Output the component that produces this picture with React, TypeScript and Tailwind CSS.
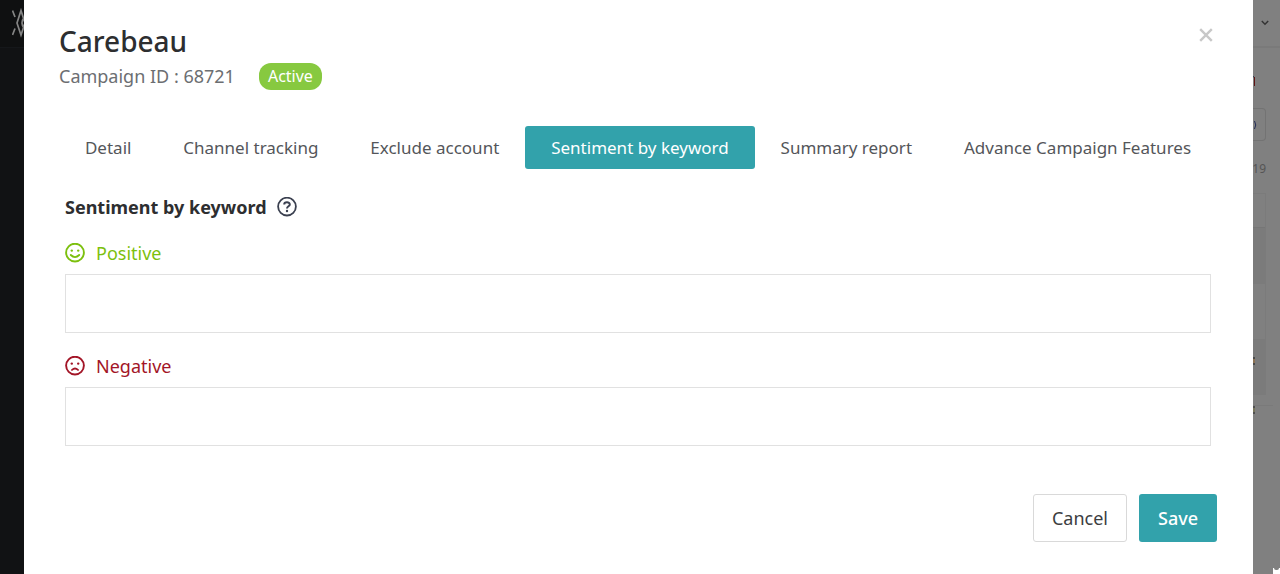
import React from "react";

const tabs = [
  "Detail",
  "Channel tracking",
  "Exclude account",
  "Sentiment by keyword",
  "Summary report",
  "Advance Campaign Features",
];

function Smiley({ sad = false }: { sad?: boolean }) {
  return (
    <svg viewBox="0 0 20 20" className="size-5" fill="none" stroke="currentColor" strokeWidth="1.9" strokeLinecap="round" aria-hidden="true">
      <circle cx="10" cy="9.6" r="8.9" />
      <circle cx="6.8" cy="7.6" r="1.2" fill="currentColor" stroke="none" />
      <circle cx="13.2" cy="7.6" r="1.2" fill="currentColor" stroke="none" />
      <path d={sad ? "M7 13.9 Q10 11.3 13 13.9" : "M5.8 12 Q10 16.2 14.2 12"} />
    </svg>
  );
}

function Sidebar() {
  return (
    <aside className="w-6 shrink-0 overflow-hidden bg-[#111214]">
      <div className="h-12 border-b border-[#15171a] bg-[#0f1011] pt-2 pl-3">
        <svg viewBox="0 0 24 30" className="h-[30px] w-6 max-w-none" fill="none" stroke="#858585" strokeWidth="1.7" aria-hidden="true">
          <path d="M0.5 2.5 L3 9 M0.5 27 L3 20.5 M9 2.5 L5 15 L9 27 L13 15 Z M12 9.5 Q8 15 12 20" />
        </svg>
      </div>
    </aside>
  );
}

function PageEdge() {
  return (
    <aside className="flex w-[27px] shrink-0 flex-col overflow-hidden bg-[#808080]" aria-hidden="true">
      <div className="flex h-12 items-center justify-center border-b-2 border-[#7a7a7a]">
        <svg viewBox="0 0 8 6" className="ml-[-4px] h-[6px] w-2" fill="none" stroke="#333333" strokeWidth="1.5">
          <path d="M0.8 1 L4 4.2 L7.2 1" />
        </svg>
      </div>
      <svg viewBox="0 0 3 10" className="mt-7 h-[10px] w-[3px] shrink-0" fill="none" strokeWidth="1">
        <path d="M0 0.8 H1" stroke="#1b2440" />
        <path d="M1.5 1 V10" stroke="#601414" />
      </svg>
      <div className="mt-[22px] mr-[14px] flex h-[33px] items-center rounded-r border border-l-0 border-[#737373]">
        <svg viewBox="0 0 4 8" className="h-2 w-1" fill="none" stroke="#222c55">
          <path d="M1.5 0 Q4 4 1.5 8" />
        </svg>
      </div>
      <div className="mt-5 mr-[14px] flex h-4 items-center justify-end text-xs text-[#555555]">19</div>
      <div className="mt-4 mr-[14px] border border-l-0 border-[#7b7b7b]">
        <div className="h-[34px] border-b border-[#767676]" />
        <div className="h-14 bg-[#7b7b7b]" />
        <div className="h-[55px]" />
        <div className="flex h-[55px] items-center bg-[#7b7b7b]">
          <div className="mb-3 h-2 w-[2px] border-y-2 border-[#4b4b4b] bg-[#8b7254]" />
        </div>
      </div>
      <div className="mt-[10px] mr-[7px] border-t border-[#7a7a7a]">
        <div className="h-2 w-[2px] border-y-2 border-[#505050] bg-[#77755c]" />
      </div>
      <div className="mt-auto flex h-[6px] justify-end">
        <div className="w-[7px] bg-white">
          <div className="mx-px h-[2px] rounded-b bg-[#808080]" />
        </div>
      </div>
    </aside>
  );
}

function KeywordField({ id, label, sad, color }: { id: string; label: string; sad?: boolean; color: string }) {
  return (
    <div>
      <label htmlFor={id} className={"flex h-[42px] items-center gap-[11px] text-lg leading-6 " + color}>
        <Smiley sad={sad} />
        {label}
      </label>
      <textarea id={id} className="block h-[59px] w-full resize-none border border-[#e1e1e1] px-3 py-2 outline-none" />
    </div>
  );
}

export default function App() {
  return (
    <div className="flex min-h-screen font-['Noto_Sans',sans-serif] text-[#2d2e30]">
      <Sidebar />
      <main className="flex min-w-0 flex-1 flex-col bg-white pt-6 pr-9 pb-8 pl-[35px]">
        <header className="flex items-start justify-between">
          <div>
            <h1 className="text-[28px] leading-[34px] font-medium">Carebeau</h1>
            <div className="mt-[5px] flex items-center gap-6">
              <p className="text-lg leading-[23px] text-[#6c6e72]">Campaign ID : 68721</p>
              <span className="h-[27px] rounded-[12px] bg-[#87c940] px-[9px] text-base leading-[27px] text-white">Active</span>
            </div>
          </div>
          <button type="button" aria-label="Close" className="mt-1 mr-1 text-[#c8c8c8]">
            <svg viewBox="0 0 14 14" className="size-[14px]" fill="none" stroke="currentColor" strokeWidth="2.4">
              <path d="M1.2 1.2 L12.8 12.8 M12.8 1.2 L1.2 12.8" />
            </svg>
          </button>
        </header>
        <nav className="mt-9 flex">
          {tabs.map((tab) => (
            <button
              key={tab}
              type="button"
              className={
                "h-[43px] flex-auto rounded-[3px] text-[17px] whitespace-nowrap " +
                (tab === "Sentiment by keyword" ? "bg-[#32a2ab] text-white" : "text-[#54565a]")
              }
            >
              {tab}
            </button>
          ))}
        </nav>
        <section className="mt-6 mr-[6px] ml-[6px]">
          <h2 className="flex items-center gap-[10px] text-lg leading-7 font-bold">
            Sentiment by keyword
            <svg viewBox="0 0 20 20" className="size-5" fill="none" stroke="#3b4050" strokeWidth="1.8" aria-hidden="true">
              <circle cx="10" cy="9.6" r="8.9" />
              <path d="M7.2 7.6 C7.2 4.6 12.8 4.6 12.8 7.4 C12.8 9.4 10 9.2 10 11.4" strokeWidth="2" />
              <circle cx="10" cy="14" r="1.2" fill="#3b4050" stroke="none" />
            </svg>
          </h2>
          <div className="mt-[11px] flex flex-col gap-3">
            <KeywordField id="positive" label="Positive" color="text-[#7cc00e]" />
            <KeywordField id="negative" label="Negative" sad color="text-[#a31527]" />
          </div>
        </section>
        <footer className="mt-auto flex justify-end gap-3 text-lg">
          <button type="button" className="h-12 rounded-[3px] border border-[#d9d9d9] px-[18px] text-[#3c3d3f]">Cancel</button>
          <button type="button" className="h-12 rounded-[3px] bg-[#32a2ab] px-[19px] font-medium text-white">Save</button>
        </footer>
      </main>
      <PageEdge />
    </div>
  );
}
